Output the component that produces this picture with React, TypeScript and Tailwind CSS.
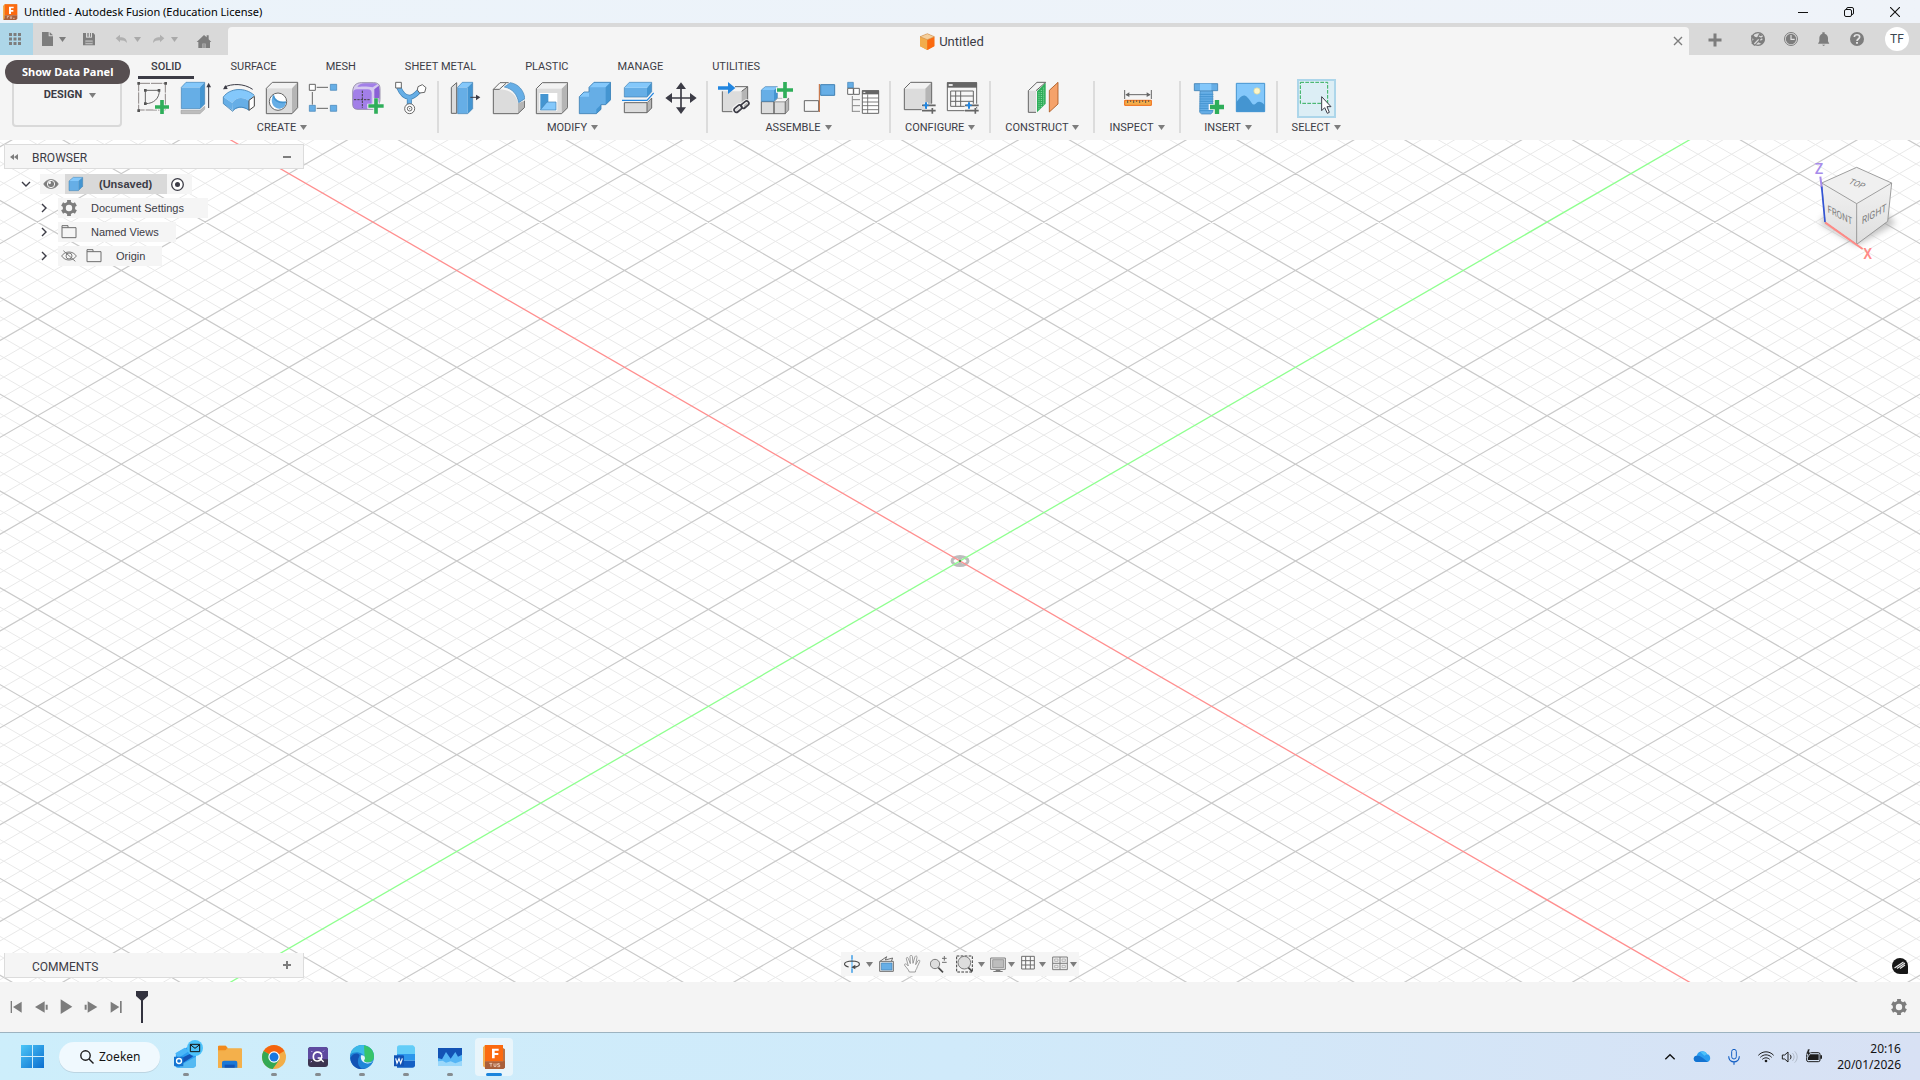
import React from "react";

type IconProps = { vb: string; size?: string; children: React.ReactNode };

function Icon({ vb, size = "size-[34px]", children }: IconProps) {
  return (
    <svg viewBox={vb} className={`${size} shrink-0`} fill="none" aria-hidden="true">
      {children}
    </svg>
  );
}

function Caret({ color = "text-[#7d7d7d]" }: { color?: string }) {
  return (
    <svg viewBox="0 0 7 5" className={`h-[5px] w-[7px] shrink-0 ${color}`} aria-hidden="true">
      <path d="M0 0h7L3.5 5z" fill="currentColor" />
    </svg>
  );
}

const L = "#84c8fb";
const B = "#66aee6";
const D = "#4495d1";
const O = "#3f80b3";
const G = "#dcdcdc";
const K = "#666666";

/* ---------- title bar ---------- */

function FusionLogo() {
  return (
    <Icon vb="6 9 48 48" size="size-4">
      <path d="M9 16l6-6h36v32H9z" fill="#e0862a" />
      <path d="M9 16l6-6v42l-6 5z" fill="#f0ae52" />
      <path d="M14 10h38v33H14z" fill="#fb6a10" />
      <path d="M14 43h38v10l-4 4H10l4-6z" fill="#a95f3a" />
      <path d="M27 17h14v5h-8v5h7v5h-7v7h-6z" fill="#fff" />
      <path d="M22 46v6m0-6h5m4 0v6h4v-6m4 6h5" stroke="#f3d9c8" strokeWidth="2" />
    </Icon>
  );
}

function TitleBar() {
  const btn = "flex h-full w-[46px] items-center justify-center";
  return (
    <header className="flex h-[23px] shrink-0 items-center bg-gradient-to-r from-[#ebf3fa] to-[#eff3f9] px-[2px]">
      <FusionLogo />
      <h1 className="ml-[6px] font-['Noto_Sans'] text-[11px] leading-4 text-black">
        Untitled - Autodesk Fusion (Education License)
      </h1>
      <div className="ml-auto flex h-full">
        <button className={btn} aria-label="Minimize">
          <svg viewBox="0 0 10 10" className="size-[10px]"><path d="M0 5.5h10" stroke="#111" /></svg>
        </button>
        <button className={btn} aria-label="Restore">
          <svg viewBox="0 0 10 10" className="size-[10px]" fill="none" stroke="#111">
            <rect x=".5" y="2.5" width="7" height="7" rx="1.5" />
            <path d="M2.5 2.5V2A1.5 1.5 0 0 1 4 .5h4A1.5 1.5 0 0 1 9.500 2v4A1.500 1.500 0 0 1 8 7.500" />
          </svg>
        </button>
        <button className={btn} aria-label="Close">
          <svg viewBox="0 0 10 10" className="size-[10px]"><path d="M0 0l10 10M10 0L0 10" stroke="#111" strokeWidth="1.1" /></svg>
        </button>
      </div>
    </header>
  );
}

/* ---------- document tab bar ---------- */

function TabBar() {
  return (
    <div className="flex h-8 shrink-0 items-stretch bg-[#d9d9d9]">
      <button className="flex w-[33px] items-center justify-center bg-[#add6e8] pr-[3px]" aria-label="Show Data Panel">
        <svg viewBox="0 0 12 12" className="size-3" fill="#7d7d7d">
          <path d="M0 0h3v3H0zM4.500 0h3v3h-3zM9 0h3v3H9zM0 4.500h3v3H0zM4.500 4.500h3v3h-3zM9 4.500h3v3H9zM0 9h3v3H0zM4.500 9h3v3h-3zM9 9h3v3H9z" />
        </svg>
      </button>
      <button className="ml-[7px] flex items-center gap-[3px]" aria-label="File">
        <Icon vb="120 93 48 48" size="size-4">
          <path d="M126 96h20v13h13v29h-33z" fill="#7d7d7d" />
          <path d="M149 96l10 10h-10z" fill="#7d7d7d" />
        </Icon>
        <Caret />
      </button>
      <button className="ml-[15px]" aria-label="Save">
        <Icon vb="243 93 48 48" size="size-4">
          <path d="M249 99h31l5 5v32h-36z" fill="#7d7d7d" />
          <path d="M258 99h18v14h-18z" fill="#d9d9d9" />
          <path d="M262 99h4v11h-4zM270 99h3v11h-3z" fill="#7d7d7d" />
          <path d="M256 121h22v12h-22z" fill="#b9b9b9" />
          <path d="M256 127h22" stroke="#7d7d7d" strokeWidth="3" />
        </Icon>
      </button>
      <button className="ml-[17px] flex items-center gap-1" aria-label="Undo">
        <Icon vb="342 93 48 48" size="size-4">
          <path d="M347 115l13-11v8c14 0 20 5 21 17-5-6-10-8-21-8v6z" fill="#b0b0b0" />
        </Icon>
        <Caret color="text-[#a9a9a9]" />
      </button>
      <button className="ml-[10px] flex items-center gap-1" aria-label="Redo">
        <Icon vb="453 93 48 48" size="size-4">
          <path d="M493 115l-13-11v8c-14 0-20 5-21 17 5-6 10-8 21-8v6z" fill="#b0b0b0" />
        </Icon>
        <Caret color="text-[#a9a9a9]" />
      </button>
      <button className="ml-[18px] pt-1.5" aria-label="Home">
        <Icon vb="588 105 48 48" size="size-4">
          <path d="M590 129l22-21 8 7v-6h6v12l8 8h-4v18h-13v-13h-10v13h-12v-18z" fill="#7d7d7d" />
          <path d="M607 134h10v13h-10z" fill="#9b9b9b" />
        </Icon>
      </button>
      <div className="ml-4 mt-1 flex flex-1 items-center rounded-t-[4px] bg-[#f5f5f5]">
        <button className="flex flex-1 items-center justify-center gap-1 pl-[3px] pt-[2px] font-['Roboto'] text-[13px] leading-4 text-[#3c3c46]">
          <Icon vb="120 39 48 54" size="h-[18px] w-4">
            <path d="M123 50l22-9 21 9v28l-21 12-22-12z" fill="#ee8b30" />
            <path d="M123 50l22 9v31l-22-11z" fill="#f2ac4b" />
            <path d="M145 59l21-9v29l-21 11z" fill="#fb6a10" />
            <path d="M123 50l22-9 21 9-21 9z" fill="#f5cf9c" stroke="#c78a4a" strokeWidth="1.500" />
          </Icon>
          <span>Untitled</span>
        </button>
        <button className="mr-[5px]" aria-label="Close tab">
          <svg viewBox="0 0 12 12" className="size-3"><path d="M2 2l8 8M10 2l-8 8" stroke="#7d7d7d" strokeWidth="1.400" /></svg>
        </button>
      </div>
      <button className="ml-[18px] pt-[2px]" aria-label="New design">
        <svg viewBox="0 0 16 16" className="size-4"><path d="M8 1.500v13M1.500 8h13" stroke="#7d7d7d" strokeWidth="3" /></svg>
      </button>
      <button className="ml-[27px]" aria-label="Extensions">
        <Icon vb="330 93 48 48" size="size-4">
          <circle cx="354" cy="117" r="19" fill="#d9d9d9" stroke="#7d7d7d" strokeWidth="4" />
          <path d="M336 104c6 1 9 9 15 8l7-12 14 8 2 14-9 10-10-5-12 11-9-8 7-13c-4 0-7-4-8-9z" fill="#7d7d7d" />
          <path d="M343 132l13-14M357 108l6 3 5-4M361 121l6-5" stroke="#d9d9d9" strokeWidth="4" />
          <path d="M343 105l9 4" stroke="#d9d9d9" strokeWidth="5" />
        </Icon>
      </button>
      <button className="ml-[17px]" aria-label="Job status">
        <Icon vb="429 93 48 48" size="size-4">
          <circle cx="453" cy="117" r="19.500" stroke="#7d7d7d" strokeWidth="3" />
          <circle cx="453" cy="117" r="15.500" fill="#7d7d7d" />
          <path d="M453 105v13h11" stroke="#e3e3e3" strokeWidth="3.500" />
        </Icon>
      </button>
      <button className="ml-[17px]" aria-label="Notifications">
        <Icon vb="528 93 48 48" size="size-4">
          <path d="M547 97h7v4c8 3 10 8 10 14v9l4 7h-34l4-7v-9c0-6 2-11 9-14z" fill="#7d7d7d" />
          <path d="M546 134h10l-5 4z" fill="#7d7d7d" />
        </Icon>
      </button>
      <button className="ml-[17px]" aria-label="Help">
        <Icon vb="627 93 48 48" size="size-4">
          <circle cx="651" cy="117" r="21" fill="#7d7d7d" />
          <path d="M643 111c0-9 16-9 16 0 0 6-8 6-8 12" stroke="#e3e3e3" strokeWidth="5" />
          <path d="M648 126h6v5h-6z" fill="#e3e3e3" />
        </Icon>
      </button>
      <button className="ml-5 mr-[11px] flex size-6 items-center justify-center self-center rounded-full bg-white font-['Roboto'] text-[12px] text-[#3a4650]">
        TF
      </button>
    </div>
  );
}

/* ---------- ribbon icons ---------- */

const plus = (cx: number, cy: number, s = 21) => (
  <path d={`M${cx} ${cy - s}v${2 * s}M${cx - s} ${cy}h${2 * s}`} stroke="#2fae5a" strokeWidth="11" />
);

const createIcons: [string, React.ReactNode][] = [
  ["Create Sketch", (
    <Icon vb="408 243 102 102">
      <path d="M416 250h80v80h-80z" stroke="#77706f" strokeWidth="2.500" strokeDasharray="34 3" />
      <path d="M436 271h42c0 24-16 40-42 40z" stroke={K} strokeWidth="3" />
      <path d="M412 246h8v8h-8zM493 246h8v8h-8zM412 328h8v8h-8zM432 267h8v8h-8zM473 267h8v8h-8zM432 307h8v8h-8z" fill="#555" />
      <path d="M486 296v50M460 321h50" stroke="#f5f5f5" strokeWidth="15" />
      {plus(486, 321)}
    </Icon>
  )],
  ["Extrude", (
    <Icon vb="537 243 102 102">
      <path d="M543 331h57l14-12v9l-14 13h-57z" fill="#bdbdbd" stroke="#999" strokeWidth="1.500" />
      <path d="M544 262h56v64h-56z" fill={B} />
      <path d="M544 262l14-15h56l-14 15z" fill={L} />
      <path d="M600 262l14-15v65l-14 14z" fill={D} />
      <path d="M544 262l14-15h56v65l-14 14h-56z" stroke={O} strokeWidth="2" />
      <path d="M626 324v-66" stroke="#3c3c46" strokeWidth="3" />
      <path d="M626 248l7 14h-14z" fill="#3c3c46" />
    </Icon>
  )],
  ["Revolve", (
    <Icon vb="666 243 102 102">
      <path d="M672 262c24-12 60-12 86 6" stroke="#3c3c46" strokeWidth="3" />
      <path d="M669 268l8-13 6 12z" fill="#3c3c46" />
      <path d="M670 291c20-28 66-30 93-5l-16 17c-16-13-39-13-50 6z" fill={L} />
      <path d="M670 291l27 18v22l-27-20zM697 309c11-19 34-19 50-6v28c-15-12-40-10-49 3z" fill={B} />
      <path d="M670 291c20-28 66-30 93-5M670 291v20l28 23c8-14 30-18 49-3" stroke={O} strokeWidth="2.500" />
      <path d="M747 301l16-12v30l-16 12z" fill="#fff" stroke="#444" strokeWidth="3" />
    </Icon>
  )],
  ["Hole", (
    <Icon vb="795 243 102 102">
      <path d="M799 265l18-18h76v76l-17 18h-77z" fill="#f2f2f2" />
      <path d="M799 265h77v76h-77z" fill={G} />
      <path d="M876 265l17-18v76l-17 18z" fill="#b5b5b5" />
      <path d="M799 265l18-18h76v76l-17 18h-77z" stroke={K} strokeWidth="3" />
      <circle cx="834" cy="305" r="26" fill="#fff" stroke={K} strokeWidth="3" />
      <path d="M820 286c-12 18 0 42 20 40 11-1 17-8 18-20-22 4-36-6-38-20z" fill={B} />
      <path d="M820 286c2 14 16 24 38 20" stroke={D} strokeWidth="5" />
    </Icon>
  )],
  ["Pattern", (
    <Icon vb="924 243 102 102">
      <path d="M950 262h34M937 276v38M950 325h34" stroke={K} strokeWidth="3" />
      <path d="M928 253h18v18h-18z" fill="#fff" stroke={K} strokeWidth="3" />
      <path d="M991 253h19v18h-19zM928 316h18v18h-18zM991 316h19v18h-19z" fill={B} stroke={O} strokeWidth="2" />
    </Icon>
  )],
  ["Create Form", (
    <Icon vb="1053 243 102 102">
      <path d="M1058 276c0-18 10-28 26-28h36c14 0 20 6 20 18v32c0 12-8 30-24 30h-42c-12 0-16-6-16-16z" fill="#d5c9ef" />
      <path d="M1059 280c0-8 4-12 12-12h32c8 0 12 4 12 12v36c0 8-4 12-12 12h-32c-8 0-12-4-12-12z" fill="#a27fe8" />
      <path d="M1072 261c4-7 12-11 22-11h26c6 0 10 1 12 3l-14 9c-10-3-36-4-46-1z" fill="#a27fe8" />
      <path d="M1123 268l13-11c4 12 4 36 0 48l-13 13z" fill="#8a60d6" />
      <path d="M1058 276c0-18 10-28 26-28h36c14 0 20 6 20 18v32c0 12-8 30-24 30h-42c-12 0-16-6-16-16z" stroke="#8c83a0" strokeWidth="2.500" />
      <path d="M1087 272v52M1062 299h50" stroke="#444" strokeWidth="3" strokeDasharray="7 3" />
      <path d="M1128 294v50M1102 319h50" stroke="#f5f5f5" strokeWidth="15" />
      {plus(1128, 318, 23)}
    </Icon>
  )],
  ["Derive", (
    <Icon vb="1182 243 102 102">
      <path d="M1196 262c6 14 18 30 32 30s24-14 36-26M1228 290v26" stroke={O} strokeWidth="15" />
      <path d="M1196 262c6 14 18 30 32 30s24-14 36-26M1228 290v26" stroke={B} strokeWidth="11" />
      <path d="M1187 247h17v17h-17z" fill="#fff" stroke={K} strokeWidth="3" />
      <path d="M1254 260l13-6 11 9-4 14-15 2-7-9z" fill="#fff" stroke={K} strokeWidth="3" />
      <circle cx="1229" cy="326" r="15" fill="#fff" stroke={K} strokeWidth="3" />
      <circle cx="1229" cy="326" r="7" stroke={K} strokeWidth="3" />
      <circle cx="1229" cy="326" r="2" fill={K} />
    </Icon>
  )],
];

const modifyIcons: [string, React.ReactNode][] = [
  ["Press Pull", (
    <Icon vb="51 93 102 102">
      <path d="M61 112l16-14v92H61z" fill={G} stroke={K} strokeWidth="3" />
      <path d="M80 112h30v79H80z" fill={B} />
      <path d="M80 112l14-15h31l-15 15z" fill={L} />
      <path d="M110 112l15-15v79l-15 15z" fill={D} />
      <path d="M80 112l14-15h31v79l-15 15H80z" stroke={O} strokeWidth="2" />
      <path d="M118 142h20" stroke="#3c3c46" strokeWidth="3" />
      <path d="M135 134l13 8-13 9z" fill="#3c3c46" />
    </Icon>
  )],
  ["Fillet", (
    <Icon vb="180 93 102 102">
      <path d="M187 118l20-20h26c26 4 44 24 48 58v16l-20 19h-74z" fill="#f7f7f7" />
      <path d="M187 118h18c32 0 50 16 56 42v31h-74z" fill={G} />
      <path d="M261 160l20-8v20l-20 19z" fill="#b5b5b5" />
      <path d="M187 118l20-20h26M205 118h-18v73h74l20-19v-20M205 118l20-18" stroke={K} strokeWidth="3" />
      <path d="M220 111l18-13c24 4 40 22 44 48l-19 12c-4-24-18-42-43-47z" fill={B} stroke={O} strokeWidth="2" />
    </Icon>
  )],
  ["Shell", (
    <Icon vb="309 93 102 102">
      <path d="M316 116l18-18h76v75l-18 18h-76z" fill="#f2f2f2" />
      <path d="M316 116h76v75h-76z" fill={G} />
      <path d="M392 116l18-18v75l-18 18z" fill="#b5b5b5" />
      <path d="M316 116l18-18h76v75l-18 18h-76z" stroke={K} strokeWidth="3" />
      <path d="M325 129h54v53h-54z" fill="#fff" />
      <path d="M328 132h24v24l-24 24z" fill={D} />
      <path d="M328 180l20-24h27v24z" fill={L} stroke={O} strokeWidth="2" />
    </Icon>
  )],
  ["Combine", (
    <Icon vb="438 93 102 102">
      <path d="M445 140l14-14h15v-14l15-15h50v52l-15 15h-14v14l-14 13h-51z" fill={B} />
      <path d="M474 112l15-15h50l-15 15zM445 140l14-14h15v14z" fill={L} />
      <path d="M524 112l15-15v52l-15 15zM496 178l14-14v14l-14 13z" fill={D} />
      <path d="M445 140l14-14h15v-14l15-15h50v52l-15 15h-14v14l-14 13h-51z" stroke={O} strokeWidth="2.500" />
    </Icon>
  )],
  ["Split Body", (
    <Icon vb="567 93 102 102">
      <path d="M580 158h68l14-14v30l-14 14h-68z" fill={G} />
      <path d="M648 158l14-14v30l-14 14z" fill="#b5b5b5" />
      <path d="M580 158h68v30h-68zM648 158l14-14v30l-14 14" stroke={K} strokeWidth="3" />
      <path d="M580 113h68v28h-68z" fill={B} />
      <path d="M580 113l15-16h67l-14 16z" fill={L} />
      <path d="M648 113l14-16v28l-14 16z" fill={D} />
      <path d="M580 113l15-16h67v28l-14 16h-68z" stroke={O} strokeWidth="2" />
      <path d="M573 151h75l20-22" stroke="#f5f5f5" strokeWidth="8" />
      <path d="M573 151h75l20-22" stroke="#2286e0" strokeWidth="3.500" />
    </Icon>
  )],
  ["Move/Copy", (
    <Icon vb="696 93 102 102">
      <path d="M750 108v72M715 144h70" stroke="#3c3c46" strokeWidth="5" />
      <path d="M750 97l15 20h-30zM750 192l15-20h-30zM703 144l20-15v30zM797 144l-20-15v30z" fill="#3c3c46" />
    </Icon>
  )],
];

const assembleIcons: [string, React.ReactNode][] = [
  ["Insert Component", (
    <Icon vb="861 93 102 102">
      <path d="M877 124l14-14h62v58l-18 17h-58z" fill={G} />
      <path d="M877 124l14-14h62l-18 14z" fill="#f4f4f4" />
      <path d="M935 124l18-14v58l-18 17z" fill="#b5b5b5" />
      <path d="M877 124v61h36M915 110h38v44M935 124l18-14" stroke={K} strokeWidth="3" />
      <path d="M864 109h30v-13l22 18-22 18v-13h-30z" fill="#2286e0" />
      <g stroke="#f5f5f5" strokeWidth="11">
        <rect x="910" y="168" width="28" height="17" rx="8" transform="rotate(-40 924 176)" />
        <rect x="932" y="157" width="28" height="17" rx="8" transform="rotate(-40 946 165)" />
      </g>
      <g stroke="#3c3c46" strokeWidth="5">
        <rect x="911" y="169" width="26" height="14" rx="7" transform="rotate(-40 924 176)" />
        <rect x="932" y="157" width="26" height="14" rx="7" transform="rotate(-40 945 164)" />
      </g>
    </Icon>
  )],
  ["New Component", (
    <Icon vb="990 93 102 102">
      <path d="M994 155h38v36h-38zM1032 155h34v36h-34z" fill={G} stroke={K} strokeWidth="3" />
      <path d="M1032 155l11-10h33l-10 10z" fill="#f7f7f7" stroke="#999" strokeWidth="2" />
      <path d="M1066 155l10-10v35l-10 11z" fill="#b5b5b5" stroke={K} strokeWidth="2" />
      <path d="M994 120h38v34h-38z" fill={B} />
      <path d="M994 120l12-10h36l-10 10z" fill={L} />
      <path d="M1032 120l10-10v34l-10 10z" fill={D} />
      <path d="M994 120l12-10h36v34l-10 10h-38z" stroke={O} strokeWidth="2" />
      <path d="M1064 92v54M1038 120h54" stroke="#f5f5f5" strokeWidth="16" />
      {plus(1065, 120, 24)}
    </Icon>
  )],
  ["Joint", (
    <Icon vb="1119 93 102 102">
      <path d="M1123 152h43v32h-43z" fill="#f7f7f7" stroke={K} strokeWidth="3" />
      <path d="M1172 104h42v32h-42z" fill={B} stroke={O} strokeWidth="3" />
      <path d="M1168 102v84" stroke="#c0622e" strokeWidth="3" />
    </Icon>
  )],
  ["Bill of Materials", (
    <Icon vb="1248 93 102 102">
      <path d="M1253 97h17v17h-17z" fill={B} stroke={O} strokeWidth="2" />
      <path d="M1253 115h17v18h-17zM1271 115h17v18h-17z" fill="#fff" stroke={K} strokeWidth="3" />
      <path d="M1267 138v48M1267 149h23M1267 167h23M1267 184h23" stroke="#888" strokeWidth="3" />
      <path d="M1297 122h49v68h-49z" fill="#fff" stroke={K} strokeWidth="3" />
      <path d="M1296 121h51v12h-51z" fill={K} />
      <path d="M1297 144h49M1297 156h49M1297 167h49M1297 179h49M1313 133v57" stroke={K} strokeWidth="2.500" />
      <path d="M1300 127h6" stroke="#fff" strokeWidth="3" />
    </Icon>
  )],
];

const sliders = (x: number) => (
  <>
    <path d={`M${x} 256h46M${x} 272h46M${x + 14} 247v18M${x + 31} 264v18`} stroke="#f5f5f5" strokeWidth="10" />
    <path d={`M${x + 1} 256h41M${x + 1} 272h41M${x + 32} 264v17`} stroke={K} strokeWidth="5" />
    <path d={`M${x + 13} 247v19`} stroke="#2286e0" strokeWidth="6" />
    <path d={`M${x + 5} 256h16`} stroke="#2286e0" strokeWidth="5" />
  </>
);

const configureIcons: [string, React.ReactNode][] = [
  ["Configure", (
    <Icon vb="66 183 102 102">
      <path d="M73 206l19-19h63v63l-19 19H73z" fill="#f2f2f2" />
      <path d="M73 206h63v63H73z" fill={G} />
      <path d="M136 206l19-19v63l-19 19z" fill="#b5b5b5" />
      <path d="M73 206l19-19h63v63l-19 19H73z" stroke={K} strokeWidth="3" />
      {sliders(125)}
    </Icon>
  )],
  ["Configuration Table", (
    <Icon vb="195 183 102 102">
      <path d="M202 188h88v84h-88z" fill="#f7f7f7" stroke={K} strokeWidth="3" />
      <path d="M201 187h90v16h-90z" fill={K} />
      <path d="M206 195h12" stroke="#fff" strokeWidth="5" />
      <path d="M212 213h68v46h-68zM212 228h68M212 244h68M227 213v46M242 213v46" stroke={K} strokeWidth="3" />
      {sliders(254)}
    </Icon>
  )],
];

const constructIcons: [string, React.ReactNode][] = [
  ["Offset Plane", (
    <Icon vb="441 183 102 102">
      <path d="M451 212l26-25h26l-26 25v65h-26z" fill="#f4f4f4" />
      <path d="M451 212h23v65h-23z" fill={G} />
      <path d="M474 277h-23v-65l26-25h26l-29 25" stroke={K} strokeWidth="3" />
      <path d="M477 214l26-26v63l-26 26z" fill="#2fae5a" />
      <path d="M483 217v52M490 210v52M497 203v52" stroke="#b9f0c9" strokeWidth="2.500" strokeDasharray="2.500 3.500" />
      <path d="M514 211l26-24v65l-26 24z" fill="#f5a26a" stroke="#a8581f" strokeWidth="2.500" />
    </Icon>
  )],
];

const inspectIcons: [string, React.ReactNode][] = [
  ["Measure", (
    <Icon vb="723 183 102 102">
      <path d="M737 210v27M817 210v27M742 224h70" stroke={K} strokeWidth="3" />
      <path d="M739 224l12-7v14zM815 224l-12-7v14z" fill={K} />
      <path d="M737 241h80v15h-80z" fill="#f2ac4b" stroke="#f26a12" strokeWidth="3" />
      <path d="M746 241v8M755 241v5M764 241v8M773 241v5M782 241v8M791 241v5M800 241v8M809 241v5" stroke="#444" strokeWidth="2.500" />
    </Icon>
  )],
];

const insertIcons: [string, React.ReactNode][] = [
  ["Insert Fastener", (
    <Icon vb="930 183 102 102">
      <path d="M943 191h70v21h-70z" fill={B} stroke={O} strokeWidth="2.500" />
      <path d="M960 191h34v21h-34z" fill={L} />
      <path d="M960 213h38v64l-6 5h-27l-6-5z" fill={B} stroke={O} strokeWidth="2" />
      <path d="M959 223h41M959 230h41M959 237h41M959 244h41M959 251h41M959 258h41M959 265h41M959 272h41" stroke={D} strokeWidth="3" />
      <path d="M1011 237v48M986 261h48" stroke="#f5f5f5" strokeWidth="18" />
      <path d="M1011 240v42M990 261h42" stroke="#2fae5a" strokeWidth="13" />
    </Icon>
  )],
  ["Insert Canvas", (
    <Icon vb="1059 183 102 102">
      <path d="M1069 190h85v85h-85z" fill={L} />
      <path d="M1069 247c18-28 28-28 46 2 4 6 8 6 14 0s14-6 25 6v20h-85z" fill={D} />
      <circle cx="1131" cy="213" r="9.500" fill="#fdf6c9" stroke="#d9d59a" strokeWidth="2" />
      <path d="M1069 190h85v85h-85z" stroke={D} strokeWidth="3" />
    </Icon>
  )],
];

const selectIcons: [string, React.ReactNode][] = [
  ["Select", (
    <Icon vb="1254 183 102 102">
      <path d="M1258 187h82v63h-82z" stroke="#2fae5a" strokeWidth="3" strokeDasharray="11 4" />
      <path d="M1322 230v42l9-9 8 17 6-3-7-17h12z" fill="#fff" stroke="#3c3c46" strokeWidth="3" />
    </Icon>
  )],
];

/* ---------- ribbon ---------- */

function Group({ label, icons, last }: { label: string; icons: [string, React.ReactNode][]; last?: boolean }) {
  return (
    <div className="flex">
      <div className="flex flex-col items-center">
        <div className="flex h-[34px] items-center gap-px px-[5px]">
          {icons.map(([name, icon]) => (
            <button
              key={name}
              aria-label={name}
              className={
                last
                  ? "flex size-[39px] shrink-0 items-center justify-center border-2 border-[#add6ea] bg-[#dceef5]"
                  : "flex w-[42px] items-center justify-center"
              }
            >
              {icon}
            </button>
          ))}
        </div>
        <button className="flex h-[25px] items-center gap-1 px-[14px] text-[11px] leading-4">
          {label}
          <Caret />
        </button>
      </div>
      {!last && <div className="h-[52px] w-[2px] bg-[#dcdcdc]" />}
    </div>
  );
}

function Ribbon() {
  const tabs = ["SOLID", "SURFACE", "MESH", "SHEET METAL", "PLASTIC", "MANAGE", "UTILITIES"];
  return (
    <div className="flex h-[85px] shrink-0 bg-[#f5f5f5] font-['Roboto'] text-[#3c3c46]">
      <div className="relative w-[127px] shrink-0 pl-3 pt-[9px]">
        <button className="flex h-[63px] w-[110px] items-center justify-center gap-[7px] rounded-[4px] border-2 border-[#d9d9d9] pl-[6px] text-[11px] font-bold">
          DESIGN
          <Caret />
        </button>
        <div
          role="tooltip"
          className="absolute left-[5px] top-[5px] z-10 flex h-6 items-center whitespace-nowrap rounded-full bg-[#574f51] px-[17px] font-['Noto_Sans'] text-[11px] font-bold text-white"
        >
          Show Data Panel
        </div>
      </div>
      <div className="flex flex-col">
        <nav className="flex h-[26px] gap-[23px] pl-[11px]">
          {tabs.map((t, i) => (
            <button
              key={t}
              className={
                i === 0
                  ? "flex h-6 items-center border-b-[3px] border-[#3c3c46] px-[13px] pt-[2px] text-[11px] font-medium leading-4"
                  : "flex h-[21px] items-center px-[13px] pt-[2px] text-[11px] leading-4"
              }
            >
              {t}
            </button>
          ))}
        </nav>
        <div className="flex">
          <Group label="CREATE" icons={createIcons} />
          <Group label="MODIFY" icons={modifyIcons} />
          <Group label="ASSEMBLE" icons={assembleIcons} />
          <Group label="CONFIGURE" icons={configureIcons} />
          <Group label="CONSTRUCT" icons={constructIcons} />
          <Group label="INSPECT" icons={inspectIcons} />
          <Group label="INSERT" icons={insertIcons} />
          <Group label="SELECT" icons={selectIcons} last />
        </div>
      </div>
    </div>
  );
}

/* ---------- canvas ---------- */

const MAJOR = 167.74;
const SLOPE = 0.57735;
const REACH = 2400;

function lines(step: number, n: number, skip: (k: number) => boolean) {
  let d = "";
  for (let k = -n; k <= n; k++) {
    if (skip(k)) continue;
    const x = k * step;
    const h = REACH * SLOPE;
    d += `M${x - REACH} ${-h}L${x + REACH} ${h}M${x - REACH} ${h}L${x + REACH} ${-h}`;
  }
  return d;
}

const minorPath = lines(MAJOR / 5, 60, (k) => k % 5 === 0);
const majorPath = lines(MAJOR, 12, (k) => k === 0);

function FloorGrid() {
  return (
    <svg className="absolute inset-0 h-full w-full" aria-hidden="true">
      <svg x="50%" y="50%" overflow="visible" fill="none">
        <path d={minorPath} stroke="#e9e9e9" />
        <path d={majorPath} stroke="#cacaca" strokeWidth="1.200" />
        <ellipse cx="0" cy="0" rx="8" ry="4.500" stroke="#bdbdbd" strokeWidth="3" />
        <path d="M-4 -4h8L0 0zM-4 4h8L0 0z" fill="#bdbdbd" />
        <path d={`M${-REACH} ${-REACH * SLOPE}L${REACH} ${REACH * SLOPE}`} stroke="#ff8f8f" strokeWidth="1.300" />
        <path d={`M${-REACH} ${REACH * SLOPE}L${REACH} ${-REACH * SLOPE}`} stroke="#8fff8f" strokeWidth="1.300" />
        <circle r="1" fill="#4a6a3a" />
      </svg>
    </svg>
  );
}

function ViewCube() {
  return (
    <svg viewBox="510 465 300 330" className="absolute right-[10px] top-[15px] h-[110px] w-[100px]" role="img" aria-label="View cube">
      <defs>
        <filter id="cubeShadow" x="-30%" y="-30%" width="160%" height="160%">
          <feGaussianBlur stdDeviation="9" />
        </filter>
        <linearGradient id="cubeFace" x1="0" y1="0" x2="0" y2="1">
          <stop offset="0" stopColor="#f1f1f1" />
          <stop offset="1" stopColor="#dedede" />
        </linearGradient>
      </defs>
      <path d="M540 670l110 66 118-66-30-30H560z" fill="#9a9a9a" opacity=".6" filter="url(#cubeShadow)" />
      <path d="M650 502l105 47-105 62-105-62z" fill="#f0f0f0" />
      <path d="M545 549l105 62v122l-95-66z" fill="url(#cubeFace)" />
      <path d="M755 549l-105 62v122l93-69z" fill="url(#cubeFace)" />
      <path d="M650 502l105 47-12 115-93 69-95-66-10-118zM545 549l105 62 105-62M650 611v122" fill="none" stroke="#8d8d8d" strokeWidth="2.500" />
      <path d="M541 530l5 40" stroke="#a78bea" strokeWidth="6" />
      <path d="M545 560l10 106" stroke="#3355d6" strokeWidth="5" />
      <path d="M556 668l112 79" stroke="#ff8a86" strokeWidth="6" />
      <g fontFamily="Roboto, sans-serif" textAnchor="middle" fill="#7d7d7d">
        <text transform="matrix(.76 .4 .04 1 600 656)" fontSize="31">FRONT</text>
        <text transform="matrix(.8 -.44 -.04 1 702 653)" fontSize="32">RIGHT</text>
        <text transform="matrix(.8 .3 -.6 .7 645 558)" fontSize="29">TOP</text>
      </g>
      <g fontFamily="Roboto, sans-serif" textAnchor="middle" fontSize="42" fontWeight="500">
        <text x="537" y="522" fill="#a78bea">Z</text>
        <text x="683" y="776" fill="#ff8a86">X</text>
      </g>
    </svg>
  );
}

function Chevron({ open }: { open?: boolean }) {
  return (
    <svg viewBox="0 0 10 10" className="size-[10px] shrink-0" fill="none" stroke="#3c3c46" strokeWidth="1.400">
      {open ? <path d="M1 3l4 4 4-4" /> : <path d="M3 1l4 4-4 4" />}
    </svg>
  );
}

function Gear() {
  return (
    <svg viewBox="0 0 16 16" className="size-4 shrink-0" fill="none" stroke="#7d7d7d" aria-hidden="true">
      <circle cx="8" cy="8" r="4.700" strokeWidth="3" />
      <path d="M8 0v4M8 12v4M1.100 4l3.400 2M11.500 10l3.400 2M1.100 12l3.400-2M11.500 6l3.400-2" strokeWidth="3.800" />
    </svg>
  );
}

function Folder() {
  return (
    <Icon vb="181 267 48 48" size="size-4">
      <path d="M184 308v-36h18v6h24v30z" stroke="#6e6e6e" strokeWidth="3" />
      <path d="M184 278h18" stroke="#6e6e6e" strokeWidth="3" />
    </Icon>
  );
}

function BrowserTree() {
  const row = "flex h-5 items-center font-['Liberation_Sans'] text-[11px] leading-4 text-[#3c3c46]";
  return (
    <ul className="mt-[5px] flex flex-col gap-1">
      <li className={`${row} pl-[17px]`}>
        <button aria-label="Collapse"><Chevron open /></button>
        <div className="ml-[9px] flex h-5 items-center bg-[#f5f5f5] pl-[3px] pr-2">
          <button aria-label="Toggle visibility">
            <Icon vb="129 123 48 48" size="size-4">
              <path d="M131 147c10-18 34-18 44 0-10 18-34 18-44 0z" fill="#7d7d7d" stroke="#7d7d7d" strokeWidth="2" />
              <circle cx="153" cy="147" r="11" fill="#7d7d7d" stroke="#f5f5f5" strokeWidth="3" />
              <circle cx="149" cy="143" r="4" fill="#f5f5f5" />
            </Icon>
          </button>
          <button className="ml-[6px] flex h-5 items-center bg-[#d9d9d9] pl-[3px] pr-[15px] font-bold">
            <Icon vb="204 123 48 48" size="size-4">
              <path d="M207 138h28v29h-28z" fill={B} />
              <path d="M207 138l13-11h28l-13 11z" fill={L} />
              <path d="M235 138l13-11v27l-13 13z" fill={D} />
              <path d="M207 138l13-11h28v27l-13 13h-28z" stroke={O} strokeWidth="1.500" />
            </Icon>
            <span className="ml-[15px]">(Unsaved)</span>
          </button>
          <label className="ml-1 flex items-center">
            <input type="radio" defaultChecked aria-label="Activate component" className="peer sr-only" />
            <svg viewBox="0 0 13 13" className="size-[13px]" fill="none">
              <circle cx="6.500" cy="6.500" r="5.800" fill="#fff" stroke="#3c3c46" strokeWidth="1.300" />
              <circle cx="6.500" cy="6.500" r="2.500" fill="#3c3c46" />
            </svg>
          </label>
        </div>
      </li>
      <li className={`${row} pl-[35px]`}>
        <button aria-label="Expand"><Chevron /></button>
        <div className="ml-[9px] flex h-5 items-center bg-[#f5f5f5] pl-[3px] pr-6">
          <Gear />
          <span className="ml-[14px]">Document Settings</span>
        </div>
      </li>
      <li className={`${row} pl-[35px]`}>
        <button aria-label="Expand"><Chevron /></button>
        <div className="ml-[9px] flex h-5 items-center bg-[#f5f5f5] pl-[3px] pr-[17px]">
          <Folder />
          <span className="ml-[14px]">Named Views</span>
        </div>
      </li>
      <li className={`${row} pl-[35px]`}>
        <button aria-label="Expand"><Chevron /></button>
        <div className="ml-[9px] flex h-5 items-center bg-[#f5f5f5] pl-[3px] pr-[17px]">
          <button aria-label="Toggle visibility">
            <Icon vb="183 339 48 48" size="size-4">
              <path d="M185 363c10-16 34-16 44 0-10 16-34 16-44 0z" stroke="#7d7d7d" strokeWidth="3" />
              <circle cx="207" cy="363" r="9" stroke="#7d7d7d" strokeWidth="3" />
              <path d="M190 347l36 32" stroke="#7d7d7d" strokeWidth="3" />
            </Icon>
          </button>
          <span className="ml-[9px] flex"><Folder /></span>
          <span className="ml-[14px]">Origin</span>
        </div>
      </li>
    </ul>
  );
}

function NavBar() {
  const s = "size-[18px]";
  return (
    <div className="absolute bottom-[6px] left-1/2 flex h-6 -translate-x-1/2 items-center bg-[#f5f5f5] pl-[2px] pr-[2px]">
      <button className="mr-[5px] flex items-center gap-[5px]" aria-label="Orbit">
        <Icon vb="39 43 54 54" size={s}>
          <path d="M66 44v52" stroke={L} strokeWidth="5" />
          <path d="M56 79c-18-4-18-17 10-18 30 1 28 16 4 19" stroke="#4a4a4a" strokeWidth="3.500" />
          <path d="M76 72v14l-12-6z" fill="#4a4a4a" />
          <path d="M66 44v12M66 84v12" stroke={B} strokeWidth="5" />
        </Icon>
        <Caret />
      </button>
      <button className="mr-2" aria-label="Look at">
        <Icon vb="144 43 54 54" size={s}>
          <path d="M150 62l20-14-4 10 22-6-4 10" stroke="#6e6e6e" strokeWidth="3" />
          <path d="M149 62h41v30h-41z" fill="#eee" stroke="#6e6e6e" strokeWidth="3" />
          <path d="M154 67h32v21h-32z" fill={B} stroke={O} strokeWidth="2" />
        </Icon>
      </button>
      <button className="mr-2" aria-label="Pan">
        <Icon vb="222 43 54 54" size={s}>
          <path d="M238 94c-2-8-14-18-15-22 2-5 8-1 12 4l-6-22c0-5 5-5 6 0l6 15-1-22c1-4 6-4 7 0l2 21 6-20c2-4 7-2 6 2l-4 22 7-12c3-3 7-1 5 3l-7 15c-2 8-6 10-6 16z" fill="#fafafa" stroke="#8a8a8a" strokeWidth="2.500" />
        </Icon>
      </button>
      <button className="mr-2" aria-label="Zoom">
        <Icon vb="300 43 54 54" size={s}>
          <circle cx="315" cy="70" r="14" fill="#ddd" stroke="#7d7d7d" strokeWidth="3" />
          <path d="M325 81l14 14" stroke="#4a4a4a" strokeWidth="5" />
          <path d="M343 46v14M336 53h14M336 65h14" stroke="#6e6e6e" strokeWidth="3" />
        </Icon>
      </button>
      <button className="mr-1 flex items-center gap-1" aria-label="Fit">
        <Icon vb="378 43 54 54" size={s}>
          <path d="M380 46h47v48h-47z" stroke="#3c3c3c" strokeWidth="3" strokeDasharray="8 4" />
          <circle cx="403" cy="66" r="19" fill="#ddd" stroke="#7d7d7d" strokeWidth="3" />
          <path d="M415 81l12 12" stroke="#4a4a4a" strokeWidth="5" />
        </Icon>
        <Caret />
      </button>
      <button className="mr-[5px] flex items-center gap-px" aria-label="Display settings">
        <Icon vb="477 43 54 54" size={s}>
          <path d="M482 52h44v34h-44z" fill="#eee" stroke="#7d7d7d" strokeWidth="3" />
          <path d="M488 57h33v24h-33z" fill="#bdbdbd" stroke="#7d7d7d" strokeWidth="2" />
          <path d="M497 88h14v3h7v3h-28v-3h7z" fill="#7d7d7d" />
        </Icon>
        <Caret />
      </button>
      <button className="mr-[5px] flex items-center gap-px" aria-label="Grid and snaps">
        <Icon vb="570 43 54 54" size={s}>
          <path d="M575 47h38v38h-38zM587 47v38M601 47v38M575 60h38M575 73h38" fill="#fafafa" stroke="#6e6e6e" strokeWidth="3" />
        </Icon>
        <Caret />
      </button>
      <button className="flex items-center gap-px" aria-label="Viewports">
        <Icon vb="663 43 54 54" size={s}>
          <path d="M668 49h44v38h-44zM690 49v38M668 68h44" fill="#f0f0f0" stroke="#7d7d7d" strokeWidth="3" />
          <path d="M674 55h10v7h-10zM696 55h10v7h-10zM674 74h10v7h-10zM696 74h10v7h-10z" stroke="#9a9a9a" strokeWidth="2" />
        </Icon>
        <Caret />
      </button>
    </div>
  );
}

function Canvas() {
  const bar = "flex h-[25px] w-[300px] items-center border border-[#dcdcdc] bg-[#f5f5f5] font-['Roboto'] text-[12px] leading-4 text-[#3c3c46]";
  return (
    <main className="relative flex min-h-0 flex-1 flex-col justify-between overflow-hidden bg-white p-1">
      <FloorGrid />
      <section className="relative w-[300px]" aria-label="Browser">
        <div className={`${bar} pl-[5px]`}>
          <button aria-label="Collapse panel">
            <svg viewBox="0 0 8 6" className="h-[6px] w-2" fill="#7d7d7d"><path d="M4 0v6L0 3zM8 0v6L4 3z" /></svg>
          </button>
          <h2 className="ml-[14px] pt-[2px]">BROWSER</h2>
          <button className="ml-auto mr-3 h-[2px] w-2 bg-[#7d7d7d]" aria-label="Minimize panel" />
        </div>
        <BrowserTree />
      </section>
      <section className={`${bar} relative border-t-0 pl-[27px]`} aria-label="Comments">
        <h2 className="pt-[3px]">COMMENTS</h2>
        <button className="ml-auto mr-3" aria-label="Expand comments">
          <svg viewBox="0 0 8 8" className="size-2"><path d="M4 0v8M0 4h8" stroke="#7d7d7d" strokeWidth="2" /></svg>
        </button>
      </section>
      <ViewCube />
      <NavBar />
      <button className="absolute bottom-2 right-3" aria-label="Assistant">
        <svg viewBox="0 0 16 16" className="size-4">
          <path d="M8 0a8 8 0 0 1 8 8v7a1 1 0 0 1-1 1H8A8 8 0 0 1 8 0z" fill="#161616" />
          <path d="M2.500 10l9-6M5 10.500l8-5.500M8 10.500l5-3.500" stroke="#e8e8e8" strokeWidth="1.200" />
        </svg>
      </button>
    </main>
  );
}

/* ---------- timeline ---------- */

function Timeline() {
  const s = "size-4";
  return (
    <footer className="flex h-[50px] shrink-0 items-center bg-[#f4f4f4] pl-2 pr-[13px]">
      <div className="flex items-center gap-[9px]">
        <button aria-label="Go to start"><Icon vb="25 177 48 48" size={s}><path d="M33 183h4v36h-4zM66 185v33l-26-17z" fill="#7d7d7d" /></Icon></button>
        <button aria-label="Step back"><Icon vb="100 177 48 48" size={s}><path d="M135 184v34l-29-17zM138 194h6v15h-6z" fill="#7d7d7d" /></Icon></button>
        <button aria-label="Play"><Icon vb="175 177 48 48" size={s}><path d="M183 178v44l35-22z" fill="#7d7d7d" /></Icon></button>
        <button aria-label="Step forward"><Icon vb="250 177 48 48" size={s}><path d="M264 184v34l29-17zM255 194h6v15h-6z" fill="#7d7d7d" /></Icon></button>
        <button aria-label="Go to end"><Icon vb="325 177 48 48" size={s}><path d="M361 183h5v36h-5zM333 185v33l26-17z" fill="#7d7d7d" /></Icon></button>
      </div>
      <button className="ml-3" aria-label="Timeline marker">
        <svg viewBox="0 0 12 32" className="h-8 w-3" fill="#32323e"><path d="M0 0h12v5L7 9.500V32H5V9.500L0 5z" /></svg>
      </button>
      <button className="ml-auto" aria-label="Timeline settings"><Gear /></button>
    </footer>
  );
}

/* ---------- taskbar ---------- */

const apps: { name: string; icon: React.ReactNode; running: boolean; active?: boolean }[] = [
  { name: "Outlook", running: true, icon: (
    <Icon vb="27 42 102 102">
      <path d="M48 82l36-20 24 8v44c0 8-4 11-10 11H54c-6 0-8-3-8-8z" fill="#2a9df0" />
      <path d="M46 82l28-17 14 10-34 22z" fill="#4ab6f8" />
      <path d="M60 98l42-20-4 14-38 24z" fill="#1253b5" />
      <path d="M60 118l48-26v24c0 6-4 9-10 9H60z" fill="#54b9f2" />
      <path d="M42 92h28v29H46c-3 0-4-2-4-4z" fill="#1373d1" />
      <circle cx="57" cy="105" r="7.500" stroke="#fff" strokeWidth="4" />
      <circle cx="105" cy="66" r="24" fill="#4cc2fb" />
      <path d="M91 55h28v22H91zM91 56l14 11 14-11" stroke="#111" strokeWidth="3" />
    </Icon>
  ) },
  { name: "File Explorer", running: false, icon: (
    <Icon vb="159 42 102 102">
      <path d="M174 62c0-2 1-3 3-3h20l7 8h38c3 0 4 1 4 4v54h-72z" fill="#f2ae48" />
      <path d="M174 62c0-2 1-3 3-3h20l5 6-5 8h-23z" fill="#f28a1d" />
      <path d="M174 76h20l8-7h40c3 0 4 1 4 4v52h-72z" fill="#f4b04b" />
      <path d="M186 125v-14c0-5 2-7 7-7h32c5 0 7 2 7 7v14z" fill="#1a78d6" />
      <path d="M194 116h30v9h-30z" fill="#1253b5" />
    </Icon>
  ) },
  { name: "Chrome", running: true, icon: (
    <Icon vb="291 42 102 102">
      <circle cx="342" cy="93" r="36" fill="#f2ae48" />
      <path d="M342 93L311 75a36 36 0 0 1 62 0z" fill="#f4640f" />
      <path d="M342 93L311 75a36 36 0 0 0 27 54l20-28z" fill="#34a853" />
      <circle cx="342" cy="93" r="17" fill="#fff" />
      <circle cx="342" cy="93" r="13.500" fill="#1877e0" />
    </Icon>
  ) },
  { name: "Screen tool", running: true, icon: (
    <Icon vb="423 42 102 102">
      <rect x="444" y="63" width="60" height="60" rx="9" fill="#3c3450" />
      <path d="M444 100V72c0-6 3-9 9-9h42c6 0 9 3 9 9v28z" fill="#5e4aa0" />
      <path d="M485 86c-5-12-25-10-25 6s20 17 24 4h-11" stroke="#fff" strokeWidth="5" />
      <path d="M482 99l9 9M485 86v10" stroke="#fff" strokeWidth="4" />
      <path d="M454 75l3 3M492 74l-3 3M452 108l4-2" stroke="#cbb8ff" strokeWidth="3" />
    </Icon>
  ) },
  { name: "Edge", running: true, icon: (
    <Icon vb="555 42 102 102">
      <circle cx="606" cy="93" r="36" fill="#1f86d8" />
      <path d="M571 86c4-17 18-29 35-29 22 0 36 16 36 34 0 12-8 18-20 18-6 0-12-2-12-5 3-3 4-6 4-10-4-14-28-22-43-8z" fill="#3cb9e8" />
      <path d="M612 58c20 4 30 18 30 33 0 12-8 18-20 18-6 0-12-2-12-5 3-3 4-6 4-10z" fill="#36c46a" />
      <path d="M571 96c8-16 24-16 28-8-8 16 0 34 20 38-24 10-46-4-48-30z" fill="#1253b5" />
      <path d="M598 92c0 16 12 26 40 16-8 14-20 20-32 20-12-6-16-24-8-36z" fill="#1f86d8" />
      <path d="M603 88c6-2 12 2 12 8 0 4-3 6-3 9 2 5 16 7 28 0-12 14-42 8-37-17z" fill="#dff4fb" />
    </Icon>
  ) },
  { name: "Word", running: true, icon: (
    <Icon vb="687 42 102 102">
      <path d="M711 66c0-5 2-8 8-8h40l6 6v22h-54z" fill="#63cdf8" />
      <path d="M711 84h54v20h-54z" fill="#2c97ec" />
      <path d="M711 104h54v14c0 5-3 7-8 7h-46z" fill="#1560c4" />
      <path d="M702 88h27c2 0 3 1 3 3v27c0 2-1 3-3 3h-27z" fill="#1253b5" />
      <path d="M707 97l4 15 6-14 5 14 5-15" stroke="#fff" strokeWidth="3.500" />
    </Icon>
  ) },
  { name: "Monitor", running: true, icon: (
    <Icon vb="819 42 102 102">
      <path d="M834 66h72v54h-72z" fill="#1253b5" />
      <path d="M834 96l12 4 12-22 14 20 14-20 8 14 12-6v34h-72z" fill="#54b5f5" />
      <path d="M834 106l14-2 10 6 14-4 14 6 20-8v16h-72z" fill="#9ad8fb" />
    </Icon>
  ) },
  { name: "Fusion", running: true, active: true, icon: (
    <Icon vb="951 42 102 102">
      <path d="M969 64l6-7v54l6 18-12-8z" fill="#f0ae52" />
      <path d="M975 57h54v50h-54z" fill="#fb6a10" />
      <path d="M1029 66l6 4v50l-6 9z" fill="#b87346" />
      <path d="M975 106h60v19l-5 4h-55z" fill="#a95f3a" />
      <path d="M996 68h20v6h-12v7h11v6h-11v10h-8z" fill="#fff" />
      <path d="M993 112v10m-5-10h9m5 0v9h6v-9m11 1h-6v4h6v5h-7" stroke="#f3d9c8" strokeWidth="2.500" />
    </Icon>
  ) },
];

function Taskbar() {
  const s = "size-[18px]";
  return (
    <div className="flex h-12 shrink-0 items-center border-t border-[#9db3c0] bg-gradient-to-r from-[#cdeefb] via-[#d0eafa] to-[#d8e1f4] pl-[21px] pr-[19px] font-['Noto_Sans'] text-[#141414]">
      <button aria-label="Start">
        <Icon vb="63 315 69 69" size="size-[23px]">
          <defs>
            <linearGradient id="win" x1="0" y1="0" x2="1" y2="1">
              <stop offset="0" stopColor="#4cc6f7" />
              <stop offset="1" stopColor="#0b6fd0" />
            </linearGradient>
          </defs>
          <path d="M63 315h33v33H63zM99 315h33v33H99zM63 351h33v33H63zM99 351h33v33H99z" fill="url(#win)" />
        </Icon>
      </button>
      <button className="ml-[15px] flex h-[30px] w-[101px] items-center rounded-full bg-[#f0f9fe] pl-[21px] text-[12px] shadow-[0_1px_0_#bcd5e2]">
        <svg viewBox="0 0 14 14" className="size-[14px]" fill="none" stroke="#1c1c1c" strokeWidth="1.400">
          <circle cx="5.500" cy="5.500" r="4.700" />
          <path d="M9 9l4.500 4.500" />
        </svg>
        <span className="ml-[5px] leading-4">Zoeken</span>
      </button>
      <div className="ml-[7px] flex gap-[6px]">
        {apps.map((a) => (
          <button
            key={a.name}
            aria-label={a.name}
            className={
              a.active
                ? "relative flex size-[38px] items-center justify-center rounded-[4px] bg-[#e9f5fb]"
                : "relative flex size-[38px] items-center justify-center"
            }
          >
            {a.icon}
            {a.running && (
              <span
                className={
                  a.active
                    ? "absolute bottom-0 left-[11px] h-[3px] w-4 rounded-full bg-[#1b84dc]"
                    : "absolute bottom-0 left-4 h-[3px] w-[6px] rounded-full bg-[#868c90]"
                }
              />
            )}
          </button>
        ))}
      </div>
      <div className="ml-auto flex items-center">
        <button className="mr-[14px]" aria-label="Show hidden icons">
          <Icon vb="63 321 54 54" size={s}><path d="M76 355l14-14 14 14" stroke="#111" strokeWidth="4" /></Icon>
        </button>
        <button className="mr-[14px]" aria-label="OneDrive">
          <Icon vb="159 321 54 54" size={s}>
            <path d="M172 363c-14 0-14-18-2-19 4-17 27-17 31-4 12 0 14 22-1 23z" fill="#2a9df0" />
            <path d="M172 363c-14 0-14-18-2-19 10-1 16 4 34 19z" fill="#1373d1" />
            <path d="M182 334c8-5 17-1 19 6l-8 4z" fill="#4cc2fb" />
          </Icon>
        </button>
        <button className="mr-[14px]" aria-label="Microphone">
          <Icon vb="255 321 54 54" size={s}>
            <rect x="275" y="325" width="14" height="29" rx="7" stroke="#1560c4" strokeWidth="3" />
            <path d="M266 346c0 22 32 22 32 0M282 362v9" stroke="#1560c4" strokeWidth="3.500" />
          </Icon>
        </button>
        <button className="flex gap-[6px]" aria-label="Network, volume and battery">
          <Icon vb="351 321 54 54" size={s}>
            <path d="M355 343c13-14 33-14 46 0M361 349c10-10 24-10 34 0M367 355c7-6 15-6 22 0" stroke="#1c1c1c" strokeWidth="3" />
            <circle cx="378" cy="360" r="4" fill="#1c1c1c" />
          </Icon>
          <Icon vb="423 321 54 54" size={s}>
            <path d="M427 342h7l10-9v30l-10-9h-7zM450 341c4 4 4 10 0 14" stroke="#1c1c1c" strokeWidth="3" />
            <path d="M457 336c7 7 7 17 0 24M464 331c10 10 10 24 0 34" stroke="#a9b3c0" strokeWidth="2.500" />
          </Icon>
          <Icon vb="495 321 54 54" size={s}>
            <rect x="500" y="335" width="40" height="27" rx="5" fill="#d6e3f5" stroke="#1c1c1c" strokeWidth="3" />
            <path d="M510 340h26v17h-32v-8z" fill="#1c1c1c" />
            <path d="M541 343h5v10h-5z" fill="#1c1c1c" />
            <path d="M504 324l-6 15h6l-3 12 12-17h-6l3-10z" fill="#1c1c1c" stroke="#d6e3f5" strokeWidth="1.500" />
          </Icon>
        </button>
        <button className="ml-[14px] flex flex-col items-end text-[12px] leading-4">
          <span>20:16</span>
          <span>20/01/2026</span>
        </button>
      </div>
    </div>
  );
}

export default function App() {
  return (
    <div className="flex h-screen flex-col overflow-hidden bg-white font-['Roboto',sans-serif]">
      <TitleBar />
      <TabBar />
      <Ribbon />
      <Canvas />
      <Timeline />
      <Taskbar />
    </div>
  );
}
